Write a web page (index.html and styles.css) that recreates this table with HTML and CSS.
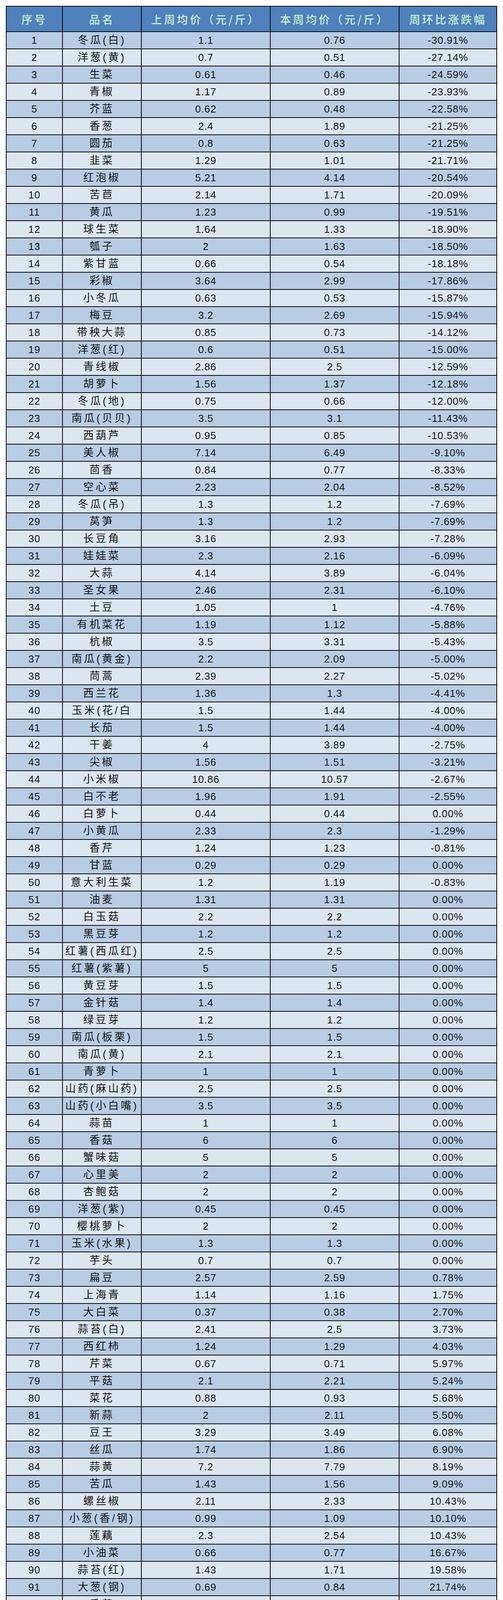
FILE: index.html
```html
<!DOCTYPE html>
<html lang="zh-CN">
<head>
<meta charset="utf-8">
<title>蔬菜周均价</title>
<link rel="stylesheet" href="styles.css">
</head>
<body>
<div class="price-table">
<div class="row head"><div class="cell">序号</div><div class="cell">品名</div><div class="cell">上周均价（元/斤）</div><div class="cell">本周均价（元/斤）</div><div class="cell">周环比涨跌幅</div></div>
<div class="row"><div class="cell">1</div><div class="cell nm">冬瓜(白)</div><div class="cell">1.1</div><div class="cell">0.76</div><div class="cell">-30.91%</div></div>
<div class="row"><div class="cell">2</div><div class="cell nm">洋葱(黄)</div><div class="cell">0.7</div><div class="cell">0.51</div><div class="cell">-27.14%</div></div>
<div class="row"><div class="cell">3</div><div class="cell nm">生菜</div><div class="cell">0.61</div><div class="cell">0.46</div><div class="cell">-24.59%</div></div>
<div class="row"><div class="cell">4</div><div class="cell nm">青椒</div><div class="cell">1.17</div><div class="cell">0.89</div><div class="cell">-23.93%</div></div>
<div class="row"><div class="cell">5</div><div class="cell nm">芥蓝</div><div class="cell">0.62</div><div class="cell">0.48</div><div class="cell">-22.58%</div></div>
<div class="row"><div class="cell">6</div><div class="cell nm">香葱</div><div class="cell">2.4</div><div class="cell">1.89</div><div class="cell">-21.25%</div></div>
<div class="row"><div class="cell">7</div><div class="cell nm">圆茄</div><div class="cell">0.8</div><div class="cell">0.63</div><div class="cell">-21.25%</div></div>
<div class="row"><div class="cell">8</div><div class="cell nm">韭菜</div><div class="cell">1.29</div><div class="cell">1.01</div><div class="cell">-21.71%</div></div>
<div class="row"><div class="cell">9</div><div class="cell nm">红泡椒</div><div class="cell">5.21</div><div class="cell">4.14</div><div class="cell">-20.54%</div></div>
<div class="row"><div class="cell">10</div><div class="cell nm">苦苣</div><div class="cell">2.14</div><div class="cell">1.71</div><div class="cell">-20.09%</div></div>
<div class="row"><div class="cell">11</div><div class="cell nm">黄瓜</div><div class="cell">1.23</div><div class="cell">0.99</div><div class="cell">-19.51%</div></div>
<div class="row"><div class="cell">12</div><div class="cell nm">球生菜</div><div class="cell">1.64</div><div class="cell">1.33</div><div class="cell">-18.90%</div></div>
<div class="row"><div class="cell">13</div><div class="cell nm">瓠子</div><div class="cell">2</div><div class="cell">1.63</div><div class="cell">-18.50%</div></div>
<div class="row"><div class="cell">14</div><div class="cell nm">紫甘蓝</div><div class="cell">0.66</div><div class="cell">0.54</div><div class="cell">-18.18%</div></div>
<div class="row"><div class="cell">15</div><div class="cell nm">彩椒</div><div class="cell">3.64</div><div class="cell">2.99</div><div class="cell">-17.86%</div></div>
<div class="row"><div class="cell">16</div><div class="cell nm">小冬瓜</div><div class="cell">0.63</div><div class="cell">0.53</div><div class="cell">-15.87%</div></div>
<div class="row"><div class="cell">17</div><div class="cell nm">梅豆</div><div class="cell">3.2</div><div class="cell">2.69</div><div class="cell">-15.94%</div></div>
<div class="row"><div class="cell">18</div><div class="cell nm">带秧大蒜</div><div class="cell">0.85</div><div class="cell">0.73</div><div class="cell">-14.12%</div></div>
<div class="row"><div class="cell">19</div><div class="cell nm">洋葱(红)</div><div class="cell">0.6</div><div class="cell">0.51</div><div class="cell">-15.00%</div></div>
<div class="row"><div class="cell">20</div><div class="cell nm">青线椒</div><div class="cell">2.86</div><div class="cell">2.5</div><div class="cell">-12.59%</div></div>
<div class="row"><div class="cell">21</div><div class="cell nm">胡萝卜</div><div class="cell">1.56</div><div class="cell">1.37</div><div class="cell">-12.18%</div></div>
<div class="row"><div class="cell">22</div><div class="cell nm">冬瓜(地)</div><div class="cell">0.75</div><div class="cell">0.66</div><div class="cell">-12.00%</div></div>
<div class="row"><div class="cell">23</div><div class="cell nm">南瓜(贝贝)</div><div class="cell">3.5</div><div class="cell">3.1</div><div class="cell">-11.43%</div></div>
<div class="row"><div class="cell">24</div><div class="cell nm">西葫芦</div><div class="cell">0.95</div><div class="cell">0.85</div><div class="cell">-10.53%</div></div>
<div class="row"><div class="cell">25</div><div class="cell nm">美人椒</div><div class="cell">7.14</div><div class="cell">6.49</div><div class="cell">-9.10%</div></div>
<div class="row"><div class="cell">26</div><div class="cell nm">茴香</div><div class="cell">0.84</div><div class="cell">0.77</div><div class="cell">-8.33%</div></div>
<div class="row"><div class="cell">27</div><div class="cell nm">空心菜</div><div class="cell">2.23</div><div class="cell">2.04</div><div class="cell">-8.52%</div></div>
<div class="row"><div class="cell">28</div><div class="cell nm">冬瓜(吊)</div><div class="cell">1.3</div><div class="cell">1.2</div><div class="cell">-7.69%</div></div>
<div class="row"><div class="cell">29</div><div class="cell nm">莴笋</div><div class="cell">1.3</div><div class="cell">1.2</div><div class="cell">-7.69%</div></div>
<div class="row"><div class="cell">30</div><div class="cell nm">长豆角</div><div class="cell">3.16</div><div class="cell">2.93</div><div class="cell">-7.28%</div></div>
<div class="row"><div class="cell">31</div><div class="cell nm">娃娃菜</div><div class="cell">2.3</div><div class="cell">2.16</div><div class="cell">-6.09%</div></div>
<div class="row"><div class="cell">32</div><div class="cell nm">大蒜</div><div class="cell">4.14</div><div class="cell">3.89</div><div class="cell">-6.04%</div></div>
<div class="row"><div class="cell">33</div><div class="cell nm">圣女果</div><div class="cell">2.46</div><div class="cell">2.31</div><div class="cell">-6.10%</div></div>
<div class="row"><div class="cell">34</div><div class="cell nm">土豆</div><div class="cell">1.05</div><div class="cell">1</div><div class="cell">-4.76%</div></div>
<div class="row"><div class="cell">35</div><div class="cell nm">有机菜花</div><div class="cell">1.19</div><div class="cell">1.12</div><div class="cell">-5.88%</div></div>
<div class="row"><div class="cell">36</div><div class="cell nm">杭椒</div><div class="cell">3.5</div><div class="cell">3.31</div><div class="cell">-5.43%</div></div>
<div class="row"><div class="cell">37</div><div class="cell nm">南瓜(黄金)</div><div class="cell">2.2</div><div class="cell">2.09</div><div class="cell">-5.00%</div></div>
<div class="row"><div class="cell">38</div><div class="cell nm">茼蒿</div><div class="cell">2.39</div><div class="cell">2.27</div><div class="cell">-5.02%</div></div>
<div class="row"><div class="cell">39</div><div class="cell nm">西兰花</div><div class="cell">1.36</div><div class="cell">1.3</div><div class="cell">-4.41%</div></div>
<div class="row"><div class="cell">40</div><div class="cell nm">玉米(花/白</div><div class="cell">1.5</div><div class="cell">1.44</div><div class="cell">-4.00%</div></div>
<div class="row"><div class="cell">41</div><div class="cell nm">长茄</div><div class="cell">1.5</div><div class="cell">1.44</div><div class="cell">-4.00%</div></div>
<div class="row"><div class="cell">42</div><div class="cell nm">干姜</div><div class="cell">4</div><div class="cell">3.89</div><div class="cell">-2.75%</div></div>
<div class="row"><div class="cell">43</div><div class="cell nm">尖椒</div><div class="cell">1.56</div><div class="cell">1.51</div><div class="cell">-3.21%</div></div>
<div class="row"><div class="cell">44</div><div class="cell nm">小米椒</div><div class="cell">10.86</div><div class="cell">10.57</div><div class="cell">-2.67%</div></div>
<div class="row"><div class="cell">45</div><div class="cell nm">白不老</div><div class="cell">1.96</div><div class="cell">1.91</div><div class="cell">-2.55%</div></div>
<div class="row"><div class="cell">46</div><div class="cell nm">白萝卜</div><div class="cell">0.44</div><div class="cell">0.44</div><div class="cell">0.00%</div></div>
<div class="row"><div class="cell">47</div><div class="cell nm">小黄瓜</div><div class="cell">2.33</div><div class="cell">2.3</div><div class="cell">-1.29%</div></div>
<div class="row"><div class="cell">48</div><div class="cell nm">香芹</div><div class="cell">1.24</div><div class="cell">1.23</div><div class="cell">-0.81%</div></div>
<div class="row"><div class="cell">49</div><div class="cell nm">甘蓝</div><div class="cell">0.29</div><div class="cell">0.29</div><div class="cell">0.00%</div></div>
<div class="row"><div class="cell">50</div><div class="cell nm">意大利生菜</div><div class="cell">1.2</div><div class="cell">1.19</div><div class="cell">-0.83%</div></div>
<div class="row"><div class="cell">51</div><div class="cell nm">油麦</div><div class="cell">1.31</div><div class="cell">1.31</div><div class="cell">0.00%</div></div>
<div class="row"><div class="cell">52</div><div class="cell nm">白玉菇</div><div class="cell">2.2</div><div class="cell">2.2</div><div class="cell">0.00%</div></div>
<div class="row"><div class="cell">53</div><div class="cell nm">黑豆芽</div><div class="cell">1.2</div><div class="cell">1.2</div><div class="cell">0.00%</div></div>
<div class="row"><div class="cell">54</div><div class="cell nm">红薯(西瓜红)</div><div class="cell">2.5</div><div class="cell">2.5</div><div class="cell">0.00%</div></div>
<div class="row"><div class="cell">55</div><div class="cell nm">红薯(紫薯)</div><div class="cell">5</div><div class="cell">5</div><div class="cell">0.00%</div></div>
<div class="row"><div class="cell">56</div><div class="cell nm">黄豆芽</div><div class="cell">1.5</div><div class="cell">1.5</div><div class="cell">0.00%</div></div>
<div class="row"><div class="cell">57</div><div class="cell nm">金针菇</div><div class="cell">1.4</div><div class="cell">1.4</div><div class="cell">0.00%</div></div>
<div class="row"><div class="cell">58</div><div class="cell nm">绿豆芽</div><div class="cell">1.2</div><div class="cell">1.2</div><div class="cell">0.00%</div></div>
<div class="row"><div class="cell">59</div><div class="cell nm">南瓜(板栗)</div><div class="cell">1.5</div><div class="cell">1.5</div><div class="cell">0.00%</div></div>
<div class="row"><div class="cell">60</div><div class="cell nm">南瓜(黄)</div><div class="cell">2.1</div><div class="cell">2.1</div><div class="cell">0.00%</div></div>
<div class="row"><div class="cell">61</div><div class="cell nm">青萝卜</div><div class="cell">1</div><div class="cell">1</div><div class="cell">0.00%</div></div>
<div class="row"><div class="cell">62</div><div class="cell nm">山药(麻山药)</div><div class="cell">2.5</div><div class="cell">2.5</div><div class="cell">0.00%</div></div>
<div class="row"><div class="cell">63</div><div class="cell nm">山药(小白嘴)</div><div class="cell">3.5</div><div class="cell">3.5</div><div class="cell">0.00%</div></div>
<div class="row"><div class="cell">64</div><div class="cell nm">蒜苗</div><div class="cell">1</div><div class="cell">1</div><div class="cell">0.00%</div></div>
<div class="row"><div class="cell">65</div><div class="cell nm">香菇</div><div class="cell">6</div><div class="cell">6</div><div class="cell">0.00%</div></div>
<div class="row"><div class="cell">66</div><div class="cell nm">蟹味菇</div><div class="cell">5</div><div class="cell">5</div><div class="cell">0.00%</div></div>
<div class="row"><div class="cell">67</div><div class="cell nm">心里美</div><div class="cell">2</div><div class="cell">2</div><div class="cell">0.00%</div></div>
<div class="row"><div class="cell">68</div><div class="cell nm">杏鲍菇</div><div class="cell">2</div><div class="cell">2</div><div class="cell">0.00%</div></div>
<div class="row"><div class="cell">69</div><div class="cell nm">洋葱(紫)</div><div class="cell">0.45</div><div class="cell">0.45</div><div class="cell">0.00%</div></div>
<div class="row"><div class="cell">70</div><div class="cell nm">樱桃萝卜</div><div class="cell">2</div><div class="cell">2</div><div class="cell">0.00%</div></div>
<div class="row"><div class="cell">71</div><div class="cell nm">玉米(水果)</div><div class="cell">1.3</div><div class="cell">1.3</div><div class="cell">0.00%</div></div>
<div class="row"><div class="cell">72</div><div class="cell nm">芋头</div><div class="cell">0.7</div><div class="cell">0.7</div><div class="cell">0.00%</div></div>
<div class="row"><div class="cell">73</div><div class="cell nm">扁豆</div><div class="cell">2.57</div><div class="cell">2.59</div><div class="cell">0.78%</div></div>
<div class="row"><div class="cell">74</div><div class="cell nm">上海青</div><div class="cell">1.14</div><div class="cell">1.16</div><div class="cell">1.75%</div></div>
<div class="row"><div class="cell">75</div><div class="cell nm">大白菜</div><div class="cell">0.37</div><div class="cell">0.38</div><div class="cell">2.70%</div></div>
<div class="row"><div class="cell">76</div><div class="cell nm">蒜苔(白)</div><div class="cell">2.41</div><div class="cell">2.5</div><div class="cell">3.73%</div></div>
<div class="row"><div class="cell">77</div><div class="cell nm">西红柿</div><div class="cell">1.24</div><div class="cell">1.29</div><div class="cell">4.03%</div></div>
<div class="row"><div class="cell">78</div><div class="cell nm">芹菜</div><div class="cell">0.67</div><div class="cell">0.71</div><div class="cell">5.97%</div></div>
<div class="row"><div class="cell">79</div><div class="cell nm">平菇</div><div class="cell">2.1</div><div class="cell">2.21</div><div class="cell">5.24%</div></div>
<div class="row"><div class="cell">80</div><div class="cell nm">菜花</div><div class="cell">0.88</div><div class="cell">0.93</div><div class="cell">5.68%</div></div>
<div class="row"><div class="cell">81</div><div class="cell nm">新蒜</div><div class="cell">2</div><div class="cell">2.11</div><div class="cell">5.50%</div></div>
<div class="row"><div class="cell">82</div><div class="cell nm">豆王</div><div class="cell">3.29</div><div class="cell">3.49</div><div class="cell">6.08%</div></div>
<div class="row"><div class="cell">83</div><div class="cell nm">丝瓜</div><div class="cell">1.74</div><div class="cell">1.86</div><div class="cell">6.90%</div></div>
<div class="row"><div class="cell">84</div><div class="cell nm">蒜黄</div><div class="cell">7.2</div><div class="cell">7.79</div><div class="cell">8.19%</div></div>
<div class="row"><div class="cell">85</div><div class="cell nm">苦瓜</div><div class="cell">1.43</div><div class="cell">1.56</div><div class="cell">9.09%</div></div>
<div class="row"><div class="cell">86</div><div class="cell nm">螺丝椒</div><div class="cell">2.11</div><div class="cell">2.33</div><div class="cell">10.43%</div></div>
<div class="row"><div class="cell">87</div><div class="cell nm">小葱(香/钢)</div><div class="cell">0.99</div><div class="cell">1.09</div><div class="cell">10.10%</div></div>
<div class="row"><div class="cell">88</div><div class="cell nm">莲藕</div><div class="cell">2.3</div><div class="cell">2.54</div><div class="cell">10.43%</div></div>
<div class="row"><div class="cell">89</div><div class="cell nm">小油菜</div><div class="cell">0.66</div><div class="cell">0.77</div><div class="cell">16.67%</div></div>
<div class="row"><div class="cell">90</div><div class="cell nm">蒜苔(红)</div><div class="cell">1.43</div><div class="cell">1.71</div><div class="cell">19.58%</div></div>
<div class="row"><div class="cell">91</div><div class="cell nm">大葱(钢)</div><div class="cell">0.69</div><div class="cell">0.84</div><div class="cell">21.74%</div></div>
<div class="row"><div class="cell">92</div><div class="cell nm">香菜</div><div class="cell">2.51</div><div class="cell">3.1</div><div class="cell">23.51%</div></div>
<div class="row"><div class="cell">93</div><div class="cell nm">菠菜</div><div class="cell">1.7</div><div class="cell">2.1</div><div class="cell">23.53%</div></div>
<div class="row"><div class="cell">94</div><div class="cell nm">小白菜</div><div class="cell">0.53</div><div class="cell">0.68</div><div class="cell">28.30%</div></div>
<div class="row"><div class="cell">95</div><div class="cell nm">大葱</div><div class="cell">0.51</div><div class="cell">0.66</div><div class="cell">29.41%</div></div>
</div>
</body>
</html>
```
FILE: styles.css
```css
html, body {
  margin: 0;
  padding: 0;
  background: #ffffff;
}

.price-table {
  margin: 15px 0 0 15px;
  width: 1258px;
  box-sizing: border-box;
  display: grid;
  grid-template-columns: 142px 200px 328px 328px 248px;
  grid-template-rows: 63px;
  grid-auto-rows: 42px;
  gap: 2px;
  padding: 2px;
  background: #0a0a0a;
  font-family: "Liberation Sans", "Noto Sans CJK SC", sans-serif;
  color: #141414;
}

.row {
  display: contents;
}

.cell {
  display: flex;
  align-items: center;
  justify-content: center;
  overflow: hidden;
  white-space: nowrap;
  font-size: 26px;
  line-height: 1;
  letter-spacing: 1px;
}

.cell.nm {
  font-size: 27px;
  letter-spacing: 5px;
}

.row:nth-child(even) > .cell {
  background: #b8cce4;
}

.row:nth-child(odd) > .cell {
  background: #dce6f1;
}

.row.head > .cell {
  background: #4f81bd;
  color: #c9f1d1;
  font-family: "Noto Sans CJK SC", sans-serif;
  font-size: 28px;
  font-weight: 500;
  letter-spacing: 5px;
}
```
